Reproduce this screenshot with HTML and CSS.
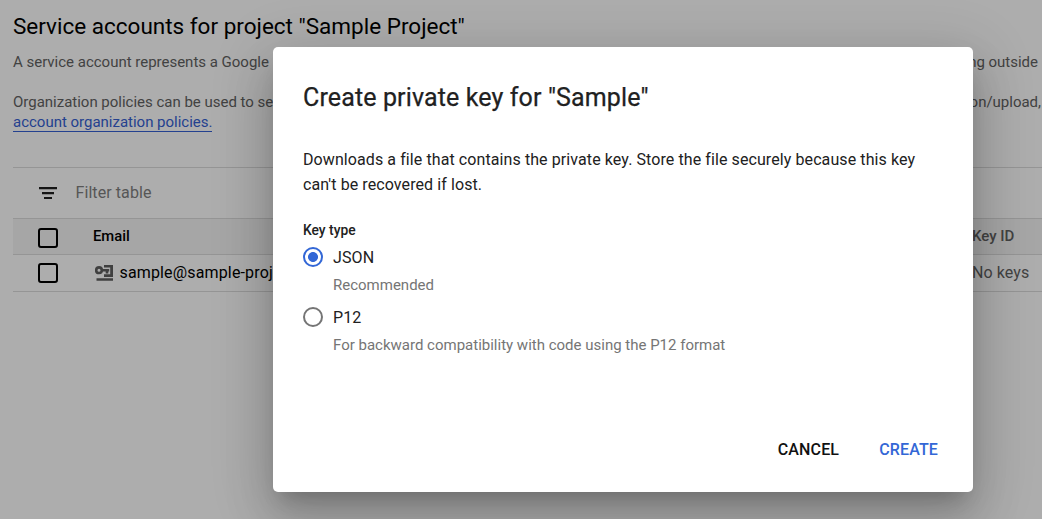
FILE: index.html
```html
<!DOCTYPE html>
<html lang="en">
<head>
<meta charset="utf-8">
<title>Service accounts</title>
<link rel="stylesheet" href="styles.css">
</head>
<body>
<main class="page">
  <h1 class="page-title">Service accounts for project "Sample Project"</h1>
  <p class="copy intro"><span>A service account represents a Google</span><span>ng outside</span></p>
  <p class="copy policies"><span>Organization policies can be used to se</span><span class="upload">on/upload,</span></p>
  <div class="copy"><a class="link" href="#">account organization policies.</a></div>
  <section class="table">
    <div class="filter">
      <svg class="filter-icon" width="18" height="12" viewBox="0 0 18 12"><path d="M0 0h18v2.3H0zM3 5h12v2.3H3zM5 10h8v2H5z" fill="#151515"/></svg>
      <span class="filter-text">Filter table</span>
    </div>
    <div class="row head">
      <span class="check"></span><span class="email">Email</span><span class="key">Key ID</span>
    </div>
    <div class="row">
      <span class="check"></span>
      <svg class="account-icon" width="19" height="16" viewBox="0 0 19 16"><path d="M9 0h9v12H9V9.3h6.2V2.5H9zM1.5 13.2H18v2.5H1.5z" fill="#404040"/><circle cx="4" cy="5.2" r="2.8" fill="none" stroke="#404040" stroke-width="2.6"/><path d="M6.5 3.9h7.7v2.6h-.9v2h-2.6v-2H6.5z" fill="#404040"/></svg>
      <span class="address">sample@sample-proj</span><span class="key">No keys</span>
    </div>
  </section>
</main>
<div class="dialog" role="dialog">
  <h2 class="dialog-title">Create private key for "Sample"</h2>
  <p class="description">Downloads a file that contains the private key. Store the file securely because this key<br>can't be recovered if lost.</p>
  <div class="label">Key type</div>
  <div class="option"><span class="radio selected"></span><div><div class="name">JSON</div><div class="hint">Recommended</div></div></div>
  <div class="option"><span class="radio"></span><div><div class="name">P12</div><div class="hint">For backward compatibility with code using the P12 format</div></div></div>
  <div class="actions"><span class="cancel">CANCEL</span><span class="create">CREATE</span></div>
</div>
</body>
</html>
```
FILE: styles.css
```css
* { box-sizing: border-box; }
body { margin: 0; width: 1042px; height: 519px; overflow: hidden; background: #adadad; font-family: Roboto, sans-serif; color: #000; }
h1, h2, p { margin: 0; font-weight: 400; }
.page { padding: 11px 0 0 13px; white-space: nowrap; }
.page-title { font-size: 22.5px; line-height: 30px; }
.copy { display: flex; justify-content: space-between; padding-right: 4px; font-size: 15px; line-height: 20px; letter-spacing: -.01px; color: #424242; }
.intro { margin-top: 11px; }
.policies { margin-top: 20px; padding-right: 1px; }
.link { color: #24418f; text-decoration: none; line-height: 20px; height: 20px; margin-bottom: -1px; border-bottom: 1px solid #24418f; }
.table { margin-top: 36px; border-top: 1px solid #959595; }
.filter { height: 50px; display: flex; align-items: center; padding-left: 26px; font-size: 16px; letter-spacing: .08px; color: #565656; }
.filter-text { margin-left: 18.5px; margin-top: -1px; }
.row { height: 37px; display: flex; align-items: center; border-bottom: 1px solid #959595; padding-left: 25px; font-size: 16px; }
.head { border-top: 1px solid #959595; background: #a6a6a6; font-size: 14.8px; font-weight: 500; }
.check { width: 20px; height: 20px; border: 2px solid #000; border-radius: 3px; }
.head .check { margin-top: 3px; }
.email { margin-left: 35px; margin-top: -2px; }
.account-icon { margin-left: 37px; }
.address { margin-left: 5.5px; margin-top: -1px; letter-spacing: .15px; }
.key { margin-left: auto; margin-top: -1px; width: 70px; color: #424242; font-size: 16px; letter-spacing: .08px; }
.head .key { font-size: 15px; letter-spacing: 0; }
.dialog { position: absolute; left: 273px; top: 47px; width: 700px; height: 445px; padding: 35px 30px 0; background: #fff; border-radius: 5px; box-shadow: 0 14px 19px -9px rgba(0,0,0,.2), 0 30px 48px 4px rgba(0,0,0,.14), 0 11px 58px 10px rgba(0,0,0,.12); color: #212121; display: flex; flex-direction: column; }
.dialog-title { font-size: 25px; line-height: 32px; letter-spacing: .13px; -webkit-text-stroke: .25px #212121; }
.description { margin-top: 33px; font-size: 16px; line-height: 25px; letter-spacing: .09px; white-space: nowrap; }
.label { margin-top: 23px; font-size: 13.8px; line-height: 20px; font-weight: 500; }
.option { display: flex; gap: 10px; height: 60px; }
.label + .option { margin-top: 5px; }
.radio { width: 20px; height: 20px; flex: none; margin-top: 2px; border: 2px solid #757575; border-radius: 50%; }
.selected { border-color: #3367d6; background: radial-gradient(circle, #3367d6 4.6px, transparent 5.3px); }
.name { padding-top: 1px; font-size: 16px; line-height: 24px; letter-spacing: .1px; }
.hint { margin-top: 5px; font-size: 15px; line-height: 20px; color: #757575; }
.actions { display: flex; justify-content: flex-end; gap: 40px; margin-top: 73px; padding-right: 5px; font-size: 16px; line-height: 24px; font-weight: 500; letter-spacing: .15px; }
.cancel { color: #111; }
.create { color: #3367d6; }
```
